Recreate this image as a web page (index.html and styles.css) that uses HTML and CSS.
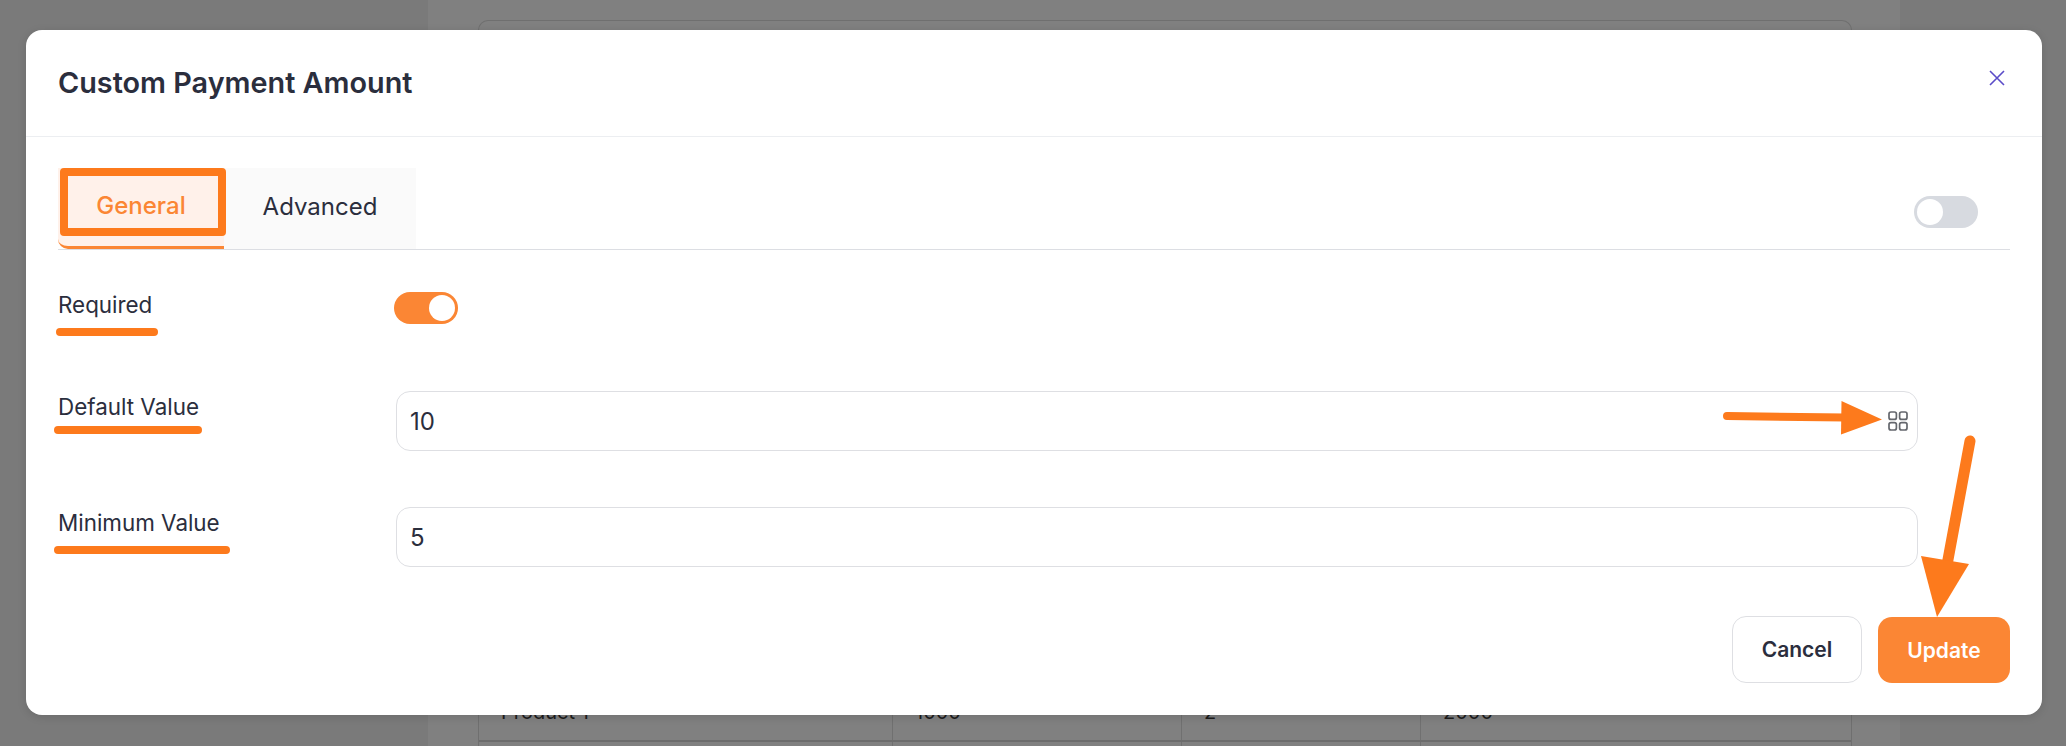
FILE: index.html
```html
<!DOCTYPE html>
<html lang="en">
<head>
<meta charset="UTF-8">
<title>Custom Payment Amount</title>
<link rel="stylesheet" href="styles.css">
</head>
<body>

<!-- page behind the dialog -->
<div class="backdrop">
    <div class="side"></div>
    <div class="main">
        <div class="card">
            <div class="row">
                <div class="cell">Product 1</div>
                <div class="cell">1000</div>
                <div class="cell">2</div>
                <div class="cell">2000</div>
            </div>
            <div class="row row-next">
                <div class="cell"></div>
                <div class="cell"></div>
                <div class="cell"></div>
                <div class="cell"></div>
            </div>
        </div>
    </div>
    <div class="side"></div>
</div>

<div class="overlay">
    <div class="modal">
        <div class="modal-header">
            <h2>Custom Payment Amount</h2>
            <button class="close" aria-label="Close">
                <svg width="16" height="16" viewBox="0 0 16 16"><path d="M1 1l14 14M15 1L1 15" stroke="#5b4cc8" stroke-width="1.6" fill="none"/></svg>
            </button>
        </div>

        <div class="modal-body">
            <div class="tabs">
                <button class="tab active">General</button>
                <button class="tab">Advanced</button>
                <span class="switch tabs-switch"><span class="knob"></span></span>
            </div>

            <div class="field field-toggle">
                <label>Required</label>
                <span class="switch on"><span class="knob"></span></span>
            </div>

            <div class="field field-default">
                <label>Default Value</label>
                <div class="input">
                    <input type="text" value="10">
                    <svg width="20" height="20" viewBox="0 0 20 20" fill="none" stroke="#64676d" stroke-width="1.7">
                        <rect x="1" y="1" width="7.4" height="7.4" rx="2"/>
                        <rect x="11.6" y="1" width="7.4" height="7.4" rx="2"/>
                        <rect x="1" y="11.6" width="7.4" height="7.4" rx="2"/>
                        <rect x="11.6" y="11.6" width="7.4" height="7.4" rx="2"/>
                    </svg>
                </div>
            </div>

            <div class="field field-min">
                <label>Minimum Value</label>
                <div class="input">
                    <input type="text" value="5">
                </div>
            </div>

            <div class="actions">
                <button class="btn btn-cancel">Cancel</button>
                <button class="btn btn-update">Update</button>
            </div>
        </div>
    </div>
</div>

<!-- hand drawn marks on top of the screenshot -->
<svg class="marks" width="2066" height="746" viewBox="0 0 2066 746">
    <rect x="64" y="172" width="158" height="60" fill="none" stroke="#fd7a1c" stroke-width="8" stroke-linejoin="round"/>
    <g stroke="#fd7a1c" stroke-width="8" stroke-linecap="round">
        <line x1="60" y1="332" x2="154" y2="332"/>
        <line x1="58" y1="430" x2="198" y2="430"/>
        <line x1="58" y1="550" x2="226" y2="550"/>
        <line x1="1727" y1="416" x2="1845" y2="417.5"/>
        <line x1="1970" y1="441" x2="1947" y2="565" stroke-width="11"/>
    </g>
    <g fill="#fd7a1c">
        <polygon points="1841.5,401 1882,419.5 1841,434.5"/>
        <polygon points="1921,556 1969,564 1937,617"/>
    </g>
</svg>

</body>
</html>
```

FILE: styles.css
```css
* { margin: 0; padding: 0; box-sizing: border-box; }

body {
    width: 2066px;
    height: 746px;
    overflow: hidden;
    background: #7a7a7a;
    font-family: "Inter", "Liberation Sans", sans-serif;
    color: #2b2e3d;
}

button {
    font-family: inherit;
    cursor: pointer;
}

/* backdrop */
.backdrop {
    display: flex;
    height: 746px;
}

.side {
    flex: 0 0 166px;
    background: #7a7a7a;
}

.side:first-child {
    flex-basis: 428px;
}

.main {
    flex: 1;
    padding: 20px 48px 0 50px;
    background: #808080;
}

.card {
    height: 726px;
    overflow: hidden;
    padding-top: 661px;
    border: 1px solid #6f6f6f;
    border-bottom: none;
    border-radius: 10px 10px 0 0;
}

.row {
    display: grid;
    grid-template-columns: 414px 289px 239px 1fr;
    height: 60px;
    border-bottom: 2px solid #6c6c6c;
}

.row-next {
    height: 4px;
    border-bottom: none;
}

.cell {
    padding: 18px 0 0 22px;
    font-size: 20px;
    line-height: 24px;
    color: #1d1d1d;
    border-right: 1px solid #707070;
}

.row-next .cell {
    padding: 0;
}

.cell:last-child {
    border-right: none;
}

/* modal */
.overlay {
    position: absolute;
    left: 26px;
    top: 30px;
}

.modal {
    width: 2016px;
    height: 685px;
    background: #fff;
    border-radius: 16px;
    box-shadow: 0 2px 10px rgba(0,0,0,0.12);
}

.modal-header {
    display: flex;
    align-items: center;
    justify-content: space-between;
    height: 107px;
    padding: 0 37px 0 32px;
    border-bottom: 1px solid #eceef1;
}

.modal-header h2 {
    font-size: 28.8px;
    font-weight: 600;
    line-height: 32px;
}

.close {
    display: flex;
    margin-top: -11px;
    border: none;
    background: none;
}

.modal-body {
    padding: 31px 32px 0;
}

.tabs {
    display: flex;
    height: 82px;
    border-bottom: 1px solid #dcdee3;
}

.tab {
    height: 81px;
    padding-bottom: 4px;
    border: none;
    background: #fafafa;
    font-size: 24px;
    font-weight: 400;
    color: #2b2e3d;
    flex: 0 0 192px;
}

.tab.active {
    flex-basis: 166px;
    border-bottom: 3px solid #fb8634;
    border-radius: 0 0 0 10px;
    background: #fff1ea;
    color: #fb8634;
    font-weight: 500;
}

.switch {
    display: flex;
    align-items: center;
    width: 64px;
    height: 32px;
    padding: 0 3px;
    border-radius: 16px;
    background: #d7dae0;
}

.switch.on {
    justify-content: flex-end;
    margin-left: -2px;
    background: #fb8634;
}

.knob {
    width: 26px;
    height: 26px;
    border-radius: 50%;
    background: #fff;
}

.tabs-switch {
    margin: 28px 32px 0 auto;
}

/* form rows */
.field {
    display: flex;
    align-items: flex-start;
    padding-right: 92px;
}

.field label {
    flex: 0 0 338px;
    padding-top: 4px;
    font-size: 22.4px;
    font-weight: 400;
    line-height: 24px;
}

.field-toggle {
    margin-top: 42px;
}

.field-toggle label {
    padding-top: 1px;
}

.field-default {
    margin-top: 67px;
}

.field-min {
    margin-top: 56px;
}

.input {
    display: flex;
    align-items: center;
    flex: 1;
    height: 60px;
    padding: 0 9px 0 13px;
    border: 1px solid #dedfe3;
    border-radius: 14px;
}

.input input {
    flex: 1;
    border: none;
    outline: none;
    background: none;
    font-family: inherit;
    font-size: 24px;
    color: #2b2e3d;
}

.actions {
    display: flex;
    align-items: flex-end;
    justify-content: flex-end;
    gap: 16px;
    margin-top: 49px;
}

.btn {
    border-radius: 14px;
    font-size: 21px;
    font-weight: 600;
}

.btn-cancel {
    width: 130px;
    height: 67px;
    border: 1px solid #dedfe3;
    background: #fff;
    color: #2b2e3d;
}

.btn-update {
    width: 132px;
    height: 66px;
    border: none;
    background: #fb8634;
    color: #fff;
}

/* annotations */
.marks {
    position: absolute;
    left: 0;
    top: 0;
    pointer-events: none;
}
```
